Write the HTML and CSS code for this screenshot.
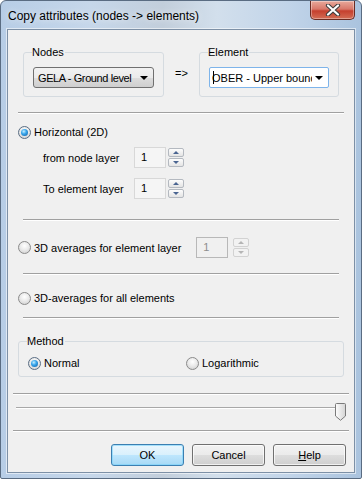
FILE: index.html
```html
<!DOCTYPE html>
<html>
  <head>
    <title>Copy attributes (nodes -> elements)</title>
    <link rel="stylesheet" href="styles.css">
  </head>
  <body>
    <div class="window">
      <div class="titlebar">
        <span class="title">Copy attributes (nodes -&gt; elements)</span>
        <div class="close">
          <svg width="16" height="12" viewBox="0 0 16 12">
            <path d="M3 1.5 L13 10.5 M13 1.5 L3 10.5" stroke="#3d3d3d" stroke-width="4.2" stroke-linecap="round" />
            <path d="M3 1.5 L13 10.5 M13 1.5 L3 10.5" stroke="#ffffff" stroke-width="2.2" stroke-linecap="round" />
          </svg>
        </div>
      </div>

      <div class="client">
        <div class="top-row">
          <fieldset class="group nodes">
            <legend>Nodes</legend>
            <div class="combo">
              <span class="combo-text tight">GELA - Ground level</span>
              <span class="arrow"></span>
            </div>
          </fieldset>
          <span class="maps">=&gt;</span>
          <fieldset class="group element">
            <legend>Element</legend>
            <div class="combo edit-combo">
              <span class="caret"></span>
              <span class="combo-text">OBER - Upper boundary</span>
              <span class="arrow"></span>
            </div>
          </fieldset>
        </div>

        <div class="sep sep-a"></div>

        <div class="option opt-2d">
          <span class="radio checked"></span>
          <span>Horizontal (2D)</span>
        </div>

        <div class="layer-row first">
          <span class="layer-label">from node layer</span>
          <div class="edit">1</div>
          <div class="spin">
            <span class="up"></span>
            <span class="down"></span>
          </div>
        </div>
        <div class="layer-row">
          <span class="layer-label">To element layer</span>
          <div class="edit">1</div>
          <div class="spin">
            <span class="up"></span>
            <span class="down"></span>
          </div>
        </div>

        <div class="sep sep-b sep-after-layers"></div>

        <div class="option opt-3d">
          <span class="radio"></span>
          <span class="opt-text">3D averages for element layer</span>
          <div class="edit disabled">1</div>
          <div class="spin disabled">
            <span class="up"></span>
            <span class="down"></span>
          </div>
        </div>

        <div class="sep sep-b sep-after-3d"></div>

        <div class="option opt-all">
          <span class="radio"></span>
          <span class="opt-text">3D-averages for all elements</span>
        </div>

        <div class="sep sep-b sep-after-all"></div>

        <fieldset class="group method">
          <legend>Method</legend>
          <div class="method-row">
            <div class="option">
              <span class="radio checked"></span>
              <span>Normal</span>
            </div>
            <div class="option">
              <span class="radio"></span>
              <span>Logarithmic</span>
            </div>
          </div>
        </fieldset>

        <div class="sep sep-c sep-after-method"></div>

        <div class="slider">
          <div class="track"></div>
          <svg class="thumb" width="11" height="18" viewBox="0 0 11 18">
            <defs>
              <linearGradient id="thumbfill" x1="0" y1="0" x2="1" y2="0">
                <stop offset="0" stop-color="#fdfdfd" />
                <stop offset="1" stop-color="#d4d4d4" />
              </linearGradient>
            </defs>
            <path d="M1.5 0.5 H9.5 Q10.5 0.5 10.5 1.5 V13 L5.5 17.3 L0.5 13 V1.5 Q0.5 0.5 1.5 0.5 Z" fill="url(#thumbfill)" stroke="#7a7a7a" />
          </svg>
        </div>

        <div class="sep sep-c sep-after-slider"></div>

        <div class="buttons">
          <button class="default">OK</button>
          <button>Cancel</button>
          <button><u>H</u>elp</button>
        </div>
      </div>
    </div>
  </body>
</html>
```

FILE: styles.css
```css
body {
  margin: 0;
  font-family: "Liberation Sans", Arial, sans-serif;
  font-size: 11px;
  color: #000;
  background: #fff;
}
.window {
  width: 362px;
  height: 479px;
  box-sizing: border-box;
  border: 1px solid #5a6c82;
  border-radius: 6px 6px 2px 2px;
  background: linear-gradient(to right, #b7cde6 0%, #c6d7ea 25%, #c2cedb 45%, #d2dfec 60%, #c1d4e9 80%, #aac3de 100%);
}
.titlebar {
  height: 28px;
  display: flex;
  align-items: flex-start;
  justify-content: space-between;
}
.title {
  font-size: 12px;
  margin: 8px 0 0 7px;
  color: #000;
  text-shadow: 0 0 6px rgba(255, 255, 255, 0.9);
}
.close {
  width: 43px;
  height: 18px;
  margin-right: 6px;
  border: 1px solid #6a2b22;
  border-top: none;
  border-radius: 0 0 5px 5px;
  background: linear-gradient(#e8a99b 0%, #d8786a 45%, #c5402e 55%, #d36d55 100%);
  box-shadow: inset 0 0 0 1px rgba(255, 255, 255, 0.35);
  display: flex;
  align-items: center;
  justify-content: center;
}
.client {
  margin: 0 6px;
  height: 444px;
  box-sizing: border-box;
  border: 1px solid #7d90a6;
  box-shadow: 0 0 0 1px rgba(255, 255, 255, 0.55);
  background: #f0f0f0;
  display: flex;
  flex-direction: column;
}
.group {
  margin: 0;
  border: 1px solid #d5dbe0;
  border-radius: 3px;
  padding: 0 9px 8px 9px;
  min-width: 0;
}
.group legend {
  padding: 0;
  margin-left: -1px;
  line-height: 14px;
  padding-right: 1px;
}
.top-row {
  display: flex;
  align-items: center;
  margin: 15px 0 0 15px;
}
.nodes {
  width: 141px;
  box-sizing: border-box;
}
.element {
  width: 140px;
  box-sizing: border-box;
}
.maps {
  width: 35px;
  text-align: center;
  margin-top: 3px;
}
.combo {
  margin-top: 8px;
  height: 21px;
  box-sizing: border-box;
  border: 1px solid #707070;
  border-radius: 3px;
  background: linear-gradient(#f2f2f2 0%, #ebebeb 50%, #dddddd 51%, #cfcfcf 100%);
  display: flex;
  align-items: center;
  padding-left: 4px;
  overflow: hidden;
}
.combo-text {
  flex: 1;
  white-space: nowrap;
  overflow: hidden;
}
.combo-text.tight {
  letter-spacing: -0.4px;
}
.arrow {
  flex: none;
  width: 0;
  height: 0;
  border-left: 4px solid transparent;
  border-right: 4px solid transparent;
  border-top: 4px solid #000;
  margin: 1px 5px 0 3px;
}
.edit-combo {
  background: #fff;
  border: 1px solid #7eb4ea;
  border-radius: 2px;
  padding-left: 3px;
}
.edit-combo .combo-text {
  margin-left: -2px;
}
.caret {
  flex: none;
  width: 1px;
  height: 13px;
  background: #000;
  z-index: 1;
}
.sep {
  height: 0;
  border-top: 1px solid #a0a0a0;
  border-bottom: 1px solid #ffffff;
}
.sep-a {
  margin: 15px 10px 0 10px;
}
.sep-b {
  margin-left: 15px;
  margin-right: 15px;
}
.sep-c {
  margin-left: 5px;
  margin-right: 5px;
}
.option {
  display: flex;
  align-items: center;
  height: 16px;
  gap: 3px;
}
.opt-2d {
  margin: 10px 0 0 10px;
}
.radio {
  width: 13px;
  height: 13px;
  box-sizing: border-box;
  border-radius: 50%;
  border: 1px solid #8a8a8a;
  background: radial-gradient(circle at 50% 35%, #ffffff 0%, #ebebeb 45%, #cbcbcb 100%);
  display: inline-flex;
  align-items: center;
  justify-content: center;
  flex: none;
}
.radio.checked {
  border-color: #5a6e84;
}
.radio.checked::after {
  content: "";
  width: 7px;
  height: 7px;
  border-radius: 50%;
  background: radial-gradient(circle at 40% 35%, #c8f0ff 0%, #38a6ec 40%, #0f5aa0 100%);
}
.layer-row {
  display: flex;
  align-items: center;
  margin: 10px 0 0 35px;
}
.layer-row.first {
  margin-top: 7px;
}
.layer-label {
  width: 91px;
}
.edit {
  width: 32px;
  height: 21px;
  box-sizing: border-box;
  border: 1px solid #d8d8d8;
  background: #f5f5f5;
  padding-left: 6px;
  line-height: 19px;
}
.edit.disabled {
  border-color: #b8b8b8;
  color: #8d8d8d;
  background: #f0f0f0;
  margin-left: 12px;
}
.spin {
  display: flex;
  flex-direction: column;
  gap: 1px;
  margin-left: 2px;
}
.spin span {
  width: 16px;
  height: 9px;
  box-sizing: border-box;
  border: 1px solid #b4b9c0;
  border-radius: 2px;
  background: linear-gradient(#fdfdfd, #e4e4e4);
  display: flex;
  align-items: center;
  justify-content: center;
}
.spin .up::after,
.spin .down::after {
  content: "";
  border-left: 3px solid transparent;
  border-right: 3px solid transparent;
}
.spin .up::after {
  border-bottom: 3px solid #4a6591;
}
.spin .down::after {
  border-top: 3px solid #4a6591;
}
.spin.disabled span {
  border-color: #d2d2d2;
  background: #f2f2f2;
}
.spin.disabled .up::after {
  border-bottom-color: #b5b5b5;
}
.spin.disabled .down::after {
  border-top-color: #b5b5b5;
}
.sep-after-layers {
  margin-top: 20px;
}
.opt-3d {
  margin: 16px 0 0 10px;
  height: 21px;
}
.opt-all {
  margin: 15px 0 0 10px;
}
.sep-after-3d {
  margin-top: 15px;
}
.sep-after-all {
  margin-top: 11px;
}
.method {
  margin: 15px 10px 0 10px;
  padding-bottom: 5px;
}
.method-row {
  display: flex;
  margin-top: 7px;
}
.method-row .option:first-child {
  width: 158px;
}
.sep-after-method {
  margin-top: 16px;
}
.slider {
  margin: 8px 8px 0 8px;
  height: 18px;
  display: flex;
  align-items: flex-start;
}
.track {
  flex: 1;
  margin-top: 4px;
  height: 0;
  border-top: 1px solid #a8a8a8;
  border-bottom: 1px solid #ffffff;
  margin-right: -3px;
}
.sep-after-slider {
  margin-top: 9px;
}
.buttons {
  display: flex;
  justify-content: flex-end;
  gap: 8px;
  margin: 12px 8px 0 0;
}
button {
  width: 73px;
  height: 22px;
  box-sizing: border-box;
  border: 1px solid #707070;
  border-radius: 3px;
  background: linear-gradient(#f2f2f2 0%, #ebebeb 50%, #dddddd 51%, #cfcfcf 100%);
  box-shadow: inset 0 0 0 1px rgba(255, 255, 255, 0.7);
  font-family: "Liberation Sans", Arial, sans-serif;
  font-size: 11px;
  color: #000;
  padding: 0;
}
button.default {
  border-color: #3c7fb1;
  background: linear-gradient(#eaf6fd 0%, #d9f0fc 50%, #bee6fd 51%, #a7d9f5 100%);
  box-shadow: inset 0 0 0 1px rgba(120, 210, 250, 0.6);
}
```
